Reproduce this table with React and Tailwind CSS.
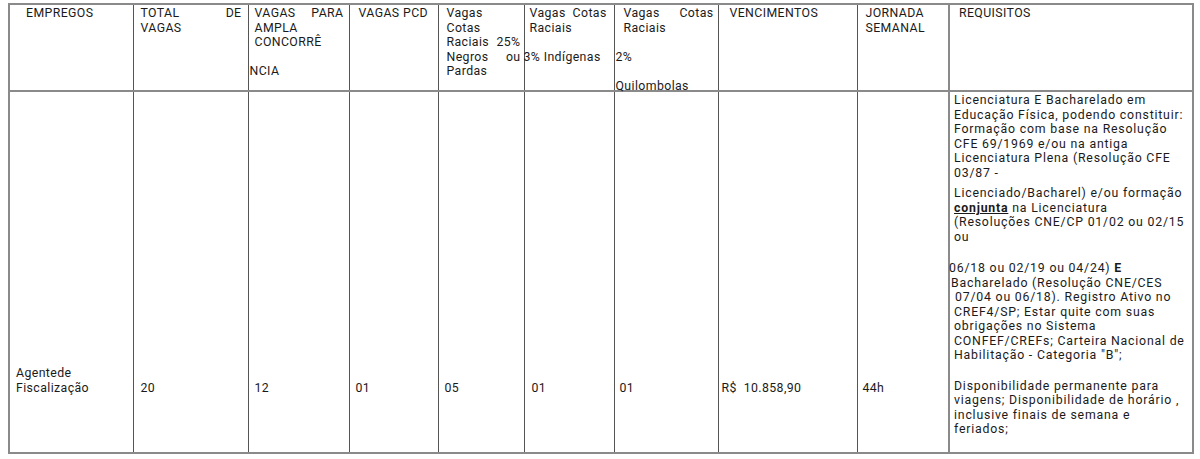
const th = 'border border-[#555] align-top text-left font-normal pt-[1px]'
const td = 'border border-[#555] align-bottom pb-[57px]'

function Line({ children, className = '' }) {
  return <div className={`whitespace-nowrap ${className}`}>{children}</div>
}

function Spread({ left, right, className = '' }) {
  return (
    <div className={`flex justify-between whitespace-nowrap ${className}`}>
      <span>{left}</span>
      <span>{right}</span>
    </div>
  )
}

export default function App() {
  return (
    <div className="bg-white min-h-[459px] pl-[8px] pt-[3px] text-[#1a1a1a] text-[12.3px] leading-[14.5px] tracking-[0.4px]" style={{ fontFamily: 'Roboto, "Open Sans", sans-serif' }}>
      <table className="table-fixed border-collapse border-2 border-[#8a8a8a] w-[1184px]">
        <colgroup>
          <col className="w-[124px]" />
          <col className="w-[115px]" />
          <col className="w-[101px]" />
          <col className="w-[89px]" />
          <col className="w-[86px]" />
          <col className="w-[90px]" />
          <col className="w-[104px]" />
          <col className="w-[139px]" />
          <col className="w-[92px]" />
          <col className="w-[244px]" />
        </colgroup>
        <thead>
          <tr className="h-[87px] border-b-2 border-[#8a8a8a]">
            <th className={`${th} pl-[16px]`}>EMPREGOS</th>
            <th className={`${th} pl-[7px] pr-[6px]`}>
              <Spread left="TOTAL" right="DE" />
              <Line>VAGAS</Line>
            </th>
            <th className={`${th} pl-[6px] pr-[5px]`}>
              <Spread left="VAGAS" right="PARA" />
              <Line>AMPLA</Line>
              <Line>CONCORRÊ</Line>
              <Line>&nbsp;</Line>
              <Line className="-ml-[5px]">NCIA</Line>
            </th>
            <th className={`${th} pl-[9px]`}>VAGAS PCD</th>
            <th className={`${th} pl-[8px] pr-[3px]`}>
              <Line>Vagas</Line>
              <Line>Cotas</Line>
              <Spread left="Raciais" right="25%" />
              <Spread left="Negros" right="ou" />
              <Line>Pardas</Line>
            </th>
            <th className={`${th} pl-[5px]`}>
              <Line>Vagas&nbsp; Cotas</Line>
              <Line>Raciais</Line>
              <Line>&nbsp;</Line>
              <Line className="-ml-[6px]">3% Indígenas</Line>
            </th>
            <th className={`${th} pl-[9px] pr-[4px]`}>
              <Spread left="Vagas" right="Cotas" />
              <Line>Raciais</Line>
              <Line>&nbsp;</Line>
              <Line className="-ml-[8px]">2%</Line>
              <Line className="h-[15px]">&nbsp;</Line>
              <Line className="-ml-[8px] h-[6px]">Quilombolas</Line>
            </th>
            <th className={`${th} pl-[11px]`}>VENCIMENTOS</th>
            <th className={`${th} pl-[8px] border-r-2 border-r-[#8a8a8a]`}>
              <Line>JORNADA</Line>
              <Line>SEMANAL</Line>
            </th>
            <th className={`${th} pl-[9px]`}>REQUISITOS</th>
          </tr>
        </thead>
        <tbody>
          <tr className="h-[362px]">
            <td className={`${td} pl-[6px]`}>
              <Line>Agentede</Line>
              <Line>Fiscalização</Line>
            </td>
            <td className={`${td} pl-[7px]`}>20</td>
            <td className={`${td} pl-[6px]`}>12</td>
            <td className={`${td} pl-[6px]`}>01</td>
            <td className={`${td} pl-[6px]`}>05</td>
            <td className={`${td} pl-[7px]`}>01</td>
            <td className={`${td} pl-[5px]`}>01</td>
            <td className={`${td} pl-[3px]`}>R$&nbsp; 10.858,90</td>
            <td className={`${td} pl-[5px] border-r-2 border-r-[#8a8a8a]`}>44h</td>
            <td className="border border-[#555] align-top pt-[1px] pl-[4px] tracking-[0.8px]">
              <Line>Licenciatura E Bacharelado em</Line>
              <Line>Educação Física, podendo constituir:</Line>
              <Line>Formação com base na Resolução</Line>
              <Line>CFE 69/1969 e/ou na antiga</Line>
              <Line>Licenciatura Plena (Resolução CFE</Line>
              <Line>03/87 -</Line>
              <Line className="mt-[6px]">Licenciado/Bacharel) e/ou formação</Line>
              <Line>
                <span className="font-bold underline">conjunta</span> na Licenciatura
              </Line>
              <Line>(Resoluções CNE/CP 01/02 ou 02/15</Line>
              <Line>ou</Line>
              <Line className="mt-[17px] -ml-[5px]">
                06/18 ou 02/19 ou 04/24) <span className="font-bold">E</span>
              </Line>
              <Line className="-ml-[3px]">Bacharelado (Resolução CNE/CES</Line>
              <Line className="pl-[1px]">07/04 ou 06/18). Registro Ativo no</Line>
              <Line>CREF4/SP; Estar quite com suas</Line>
              <Line>obrigações no Sistema</Line>
              <Line>CONFEF/CREFs; Carteira Nacional de</Line>
              <Line>Habilitação - Categoria "B";</Line>
              <Line className="mt-[16px]">Disponibilidade permanente para</Line>
              <Line>viagens; Disponibilidade de horário ,</Line>
              <Line>inclusive finais de semana e</Line>
              <Line>feriados;</Line>
            </td>
          </tr>
        </tbody>
      </table>
    </div>
  )
}
